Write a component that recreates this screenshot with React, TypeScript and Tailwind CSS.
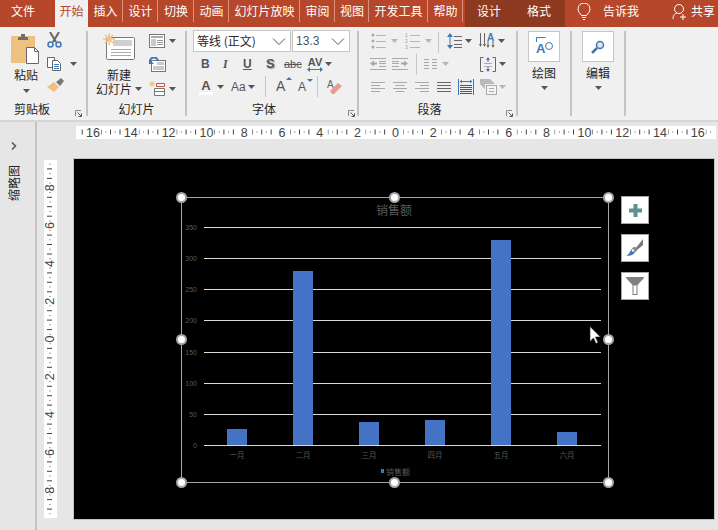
import React from "react";

const tabs: [string, string][] = [
  ["插入", "w-[35px]"],
  ["设计", "w-[35px]"],
  ["切换", "w-[36px]"],
  ["动画", "w-[35px]"],
  ["幻灯片放映", "w-[71px]"],
  ["审阅", "w-[35px]"],
  ["视图", "w-[34px]"],
  ["开发工具", "w-[59px]"],
  ["帮助", "w-[35px]"],
];

function Caret({ c = "#555", className = "" }: { c?: string; className?: string }) {
  return (
    <svg width="7" height="4" viewBox="0 0 7 4" className={className}>
      <path d="M0 0h7L3.500 4z" fill={c} />
    </svg>
  );
}

function Launcher() {
  return (
    <svg width="7" height="7" viewBox="0 0 7 7">
      <path d="M.5 6V.5H6" stroke="#8a8a8a" fill="none" />
      <path d="M2.500 2.500L6 6M6.500 3.500v3h-3" stroke="#555" fill="none" />
    </svg>
  );
}

function Sep() {
  return <div className="mt-[4px] h-[85px] w-[2px] shrink-0 bg-[#c4c4c4]" />;
}

function Label({ children, launcher }: { children: React.ReactNode; launcher?: string }) {
  return (
    <div className="relative h-[18px] text-center text-[12px] leading-[18px] text-[#262626]">
      {children}
      {launcher && (
        <span className={`absolute top-[10px] flex ${launcher}`}>
          <Launcher />
        </span>
      )}
    </div>
  );
}

function Lines({ x, w, ys, c = "#9a9a9a" }: { x: number; w: number; ys: number[]; c?: string }) {
  return (
    <>
      {ys.map((y) => (
        <path key={y} d={`M${x} ${y + 0.5}h${w}`} stroke={c} />
      ))}
    </>
  );
}

function Paste() {
  return (
    <svg width="30" height="32" viewBox="0 0 30 32">
      <rect x="0" y="2" width="24" height="27" rx="1" fill="#edc17f" />
      <path d="M7 3h3V0h4v3h3v3H7z" fill="#6d6d6d" />
      <path d="M15.500 13.500h8l4 4v12h-12z" fill="#fff" stroke="#666" />
      <path d="M23.500 13.500v4h4" fill="none" stroke="#666" />
    </svg>
  );
}
function Scissors() {
  return (
    <svg width="15" height="16" viewBox="0 0 15 16">
      <path d="M3 0l6 10M12 0L6 10" stroke="#666" strokeWidth="2" />
      <circle cx="3.500" cy="12.500" r="2.500" fill="none" stroke="#3f78b5" strokeWidth="1.500" />
      <circle cx="11.500" cy="12.500" r="2.500" fill="none" stroke="#3f78b5" strokeWidth="1.500" />
    </svg>
  );
}
function Copy() {
  return (
    <svg width="15" height="14" viewBox="0 0 15 14">
      <path d="M.5.500h7v10h-7z" fill="#fff" stroke="#666" />
      <path d="M5.500 3.500h5l3 3v7h-8z" fill="#fff" stroke="#666" />
      <Lines x={7} w={5} ys={[7, 9, 11]} c="#3f78b5" />
    </svg>
  );
}
function Brush() {
  return (
    <svg width="17" height="15" viewBox="0 0 17 15">
      <path d="M0 9l7-5 5 5-5 5z" fill="#edc17f" />
      <path d="M9 4l5-4 3 3-4 5z" fill="#777" />
    </svg>
  );
}
function NewSlide() {
  return (
    <svg width="32" height="28" viewBox="0 0 32 28">
      <rect x="3.500" y="4.500" width="28" height="22" rx="1" fill="#fff" stroke="#777" />
      <rect x="10" y="7" width="19" height="6" fill="#d0d0d0" />
      <Lines x={8} w={20} ys={[16, 19, 22]} c="#aaa" />
      <path d="M6 0v12M0 6h12M2 2l8 8M10 2l-8 8" stroke="#eec27e" strokeWidth="1.500" />
    </svg>
  );
}
function LayoutIcon() {
  return (
    <svg width="16" height="14" viewBox="0 0 16 14">
      <rect x=".5" y=".5" width="15" height="13" fill="#fff" stroke="#777" />
      <rect x="2" y="2" width="12" height="2" fill="#aaa" />
      <rect x="2" y="5" width="5" height="7" fill="#c9c9c9" />
      <Lines x={8} w={6} ys={[6, 8, 10]} c="#999" />
    </svg>
  );
}
function ResetIcon() {
  return (
    <svg width="17" height="15" viewBox="0 0 17 15">
      <rect x="2.500" y="3.500" width="14" height="11" fill="#fff" stroke="#777" />
      <rect x="8" y="5" width="7" height="3" fill="#c9c9c9" />
      <rect x="4" y="9" width="11" height="4" fill="#c9c9c9" />
      <path d="M1 5a4 4 0 0 1 8-1" fill="none" stroke="#3f78b5" strokeWidth="2" />
      <path d="M0 2v5h5z" fill="#3f78b5" />
    </svg>
  );
}
function SectionIcon() {
  return (
    <svg width="16" height="15" viewBox="0 0 16 15">
      <path d="M3 0v6M0 3h6M1 1l4 4M5 1L1 5" stroke="#eec27e" />
      <path d="M7.500 2.500h8v3h-8z" fill="#fff" stroke="#c2563a" />
      <path d="M5.500 7.500h10v7h-10zM5.500 10.500h10" fill="#fff" stroke="#777" />
    </svg>
  );
}
function Bullets() {
  return (
    <svg width="15" height="16" viewBox="0 0 15 16">
      <circle cx="2" cy="2" r="1.500" fill="#a9a9a9" />
      <circle cx="2" cy="8" r="1.500" fill="#a9a9a9" />
      <circle cx="2" cy="14" r="1.500" fill="#a9a9a9" />
      <Lines x={5} w={10} ys={[2, 8, 14]} c="#b5b5b5" />
    </svg>
  );
}
function Numbers() {
  return (
    <svg width="16" height="18" viewBox="0 0 16 18">
      <text x="0" y="5" fontSize="5" fill="#a0a0a0" fontFamily="Liberation Sans">1</text>
      <text x="0" y="11" fontSize="5" fill="#a0a0a0" fontFamily="Liberation Sans">2</text>
      <text x="0" y="17" fontSize="5" fill="#a0a0a0" fontFamily="Liberation Sans">3</text>
      <Lines x={5} w={10} ys={[3, 9, 15]} c="#b5b5b5" />
    </svg>
  );
}
function LineSpacing() {
  return (
    <svg width="15" height="16" viewBox="0 0 15 16">
      <path d="M3 2v12" stroke="#3f78b5" />
      <path d="M0 4l3-4 3 4zM0 12l3 4 3-4z" fill="#3f78b5" />
      <Lines x={7} w={8} ys={[3, 7, 11, 14]} c="#666" />
    </svg>
  );
}
function TextDir() {
  return (
    <svg width="17" height="18" viewBox="0 0 17 18">
      <path d="M1.500 1v12M5.500 1v12M9 9v5M14 9v5" stroke="#666" />
      <path d="M0 12l1.500 3L3 12zM4 12l1.500 3L7 12zM7.500 13l1.500 3 1.500-3zM12.500 13l1.500 3 1.500-3z" fill="#666" />
      <text x="8" y="9" fontSize="10" fontWeight="700" fill="#3f78b5" fontFamily="Liberation Sans">A</text>
    </svg>
  );
}
function Indent({ flip }: { flip?: boolean }) {
  return (
    <svg width="16" height="14" viewBox="0 0 16 14" className={flip ? "-scale-x-100" : ""}>
      <Lines x={0} w={16} ys={[1, 12]} c="#a9a9a9" />
      <Lines x={9} w={7} ys={[4, 6, 9]} c="#a9a9a9" />
      <path d="M0 6.500l4-3v2h3v2H4v2z" fill="#a9a9a9" />
    </svg>
  );
}
function Cols() {
  return (
    <svg width="13" height="11" viewBox="0 0 13 11">
      <Lines x={0} w={5} ys={[0, 3, 6, 9]} c="#aaa" />
      <Lines x={8} w={5} ys={[0, 3, 6, 9]} c="#aaa" />
    </svg>
  );
}
function AlignText() {
  return (
    <svg width="16" height="15" viewBox="0 0 16 15">
      <path d="M3.500.500H.5v14h3M12.500.500h3v14h-3" fill="none" stroke="#666" />
      <Lines x={4} w={8} ys={[6, 9]} c="#aaa" />
      <path d="M8 1v4M8 10v4" stroke="#3f78b5" />
      <path d="M6 3l2-3 2 3zM6 12l2 3 2-3z" fill="#3f78b5" />
    </svg>
  );
}
function Align({ kind }: { kind: "l" | "c" | "r" | "j" }) {
  const c = kind === "j" ? "#666" : "#a9a9a9";
  const short = kind === "j" ? 14 : 9;
  const sx = kind === "l" || kind === "j" ? 0 : kind === "c" ? 2.5 : 5;
  return (
    <svg width="14" height="11" viewBox="0 0 14 11">
      <Lines x={0} w={14} ys={[0, 6]} c={c} />
      <Lines x={sx} w={short} ys={[3, 9]} c={c} />
    </svg>
  );
}
function Distributed() {
  return (
    <svg width="16" height="16" viewBox="0 0 16 16">
      <path d="M.5 0v16M15.500 0v16" stroke="#3f78b5" />
      <path d="M2 2.500h12" stroke="#3f78b5" />
      <path d="M2 2.500l2-2v4zM14 2.500l-2-2v4z" fill="#3f78b5" />
      <Lines x={2} w={12} ys={[6, 8, 10, 12, 14]} c="#555" />
    </svg>
  );
}
function SmartArt() {
  return (
    <svg width="17" height="16" viewBox="0 0 17 16">
      <path d="M0 0h10l5 5H5v5L0 5z" fill="#b9b9b9" />
      <rect x="6.500" y="6.500" width="10" height="9" fill="#f4f4f4" stroke="#aaa" />
      <Lines x={9} w={5} ys={[9, 12]} c="#aaa" />
    </svg>
  );
}
function Eraser() {
  return (
    <svg width="16" height="16" viewBox="0 0 16 16">
      <text x="0" y="9" fontSize="10" fill="#666" fontFamily="Liberation Sans">A</text>
      <path d="M3 12l8-8 4 3-8 8H5z" fill="#e89a8e" />
    </svg>
  );
}
function DrawIcon() {
  return (
    <svg width="17" height="19" viewBox="0 0 17 19">
      <path d="M.5 5V.5h9" fill="none" stroke="#3f78b5" />
      <circle cx="13" cy="9" r="3.500" fill="#fff" stroke="#3f78b5" />
      <text x="0" y="16" fontSize="13" fontWeight="700" fill="#3f78b5" fontFamily="Liberation Sans">A</text>
    </svg>
  );
}
function FindIcon() {
  return (
    <svg width="14" height="14" viewBox="0 0 14 14">
      <circle cx="9" cy="5" r="3.500" fill="#dbe7f3" stroke="#3f78b5" strokeWidth="1.500" />
      <path d="M6 8l-5 5" stroke="#3f78b5" strokeWidth="2.500" />
    </svg>
  );
}

function Ruler() {
  const nums = [16, 14, 12, 10, 8, 6, 4, 2, 0, 2, 4, 6, 8, 10, 12, 14, 16];
  const step = 37.8;
  const ticks: React.ReactNode[] = [];
  for (let i = -68; i <= 68; i++) {
    if (i % 8 === 0) continue;
    const x = 318 + (i * step) / 8;
    if (x < 2 || x > 638) continue;
    const long = i % 2 === 0;
    const near = Math.abs(i) > 60 ? false : false;
    ticks.push(
      <path key={i} d={`M${x.toFixed(1)} ${long ? 3.5 : 5}v${long ? 5 : 2}`} stroke={long ? "#444" : "#aaa"} opacity={near ? 0 : 1} />
    );
  }
  return (
    <svg width="640" height="13" viewBox="0 0 640 13" className="block">
      {ticks}
      {nums.map((n, i) => (
        <g key={i}>
          <rect x={17 + i * step - 8} y="0" width="16" height="13" fill="#fff" />
          <text x={17 + i * step} y="10.500" fontSize="12.500" textAnchor="middle" fill="#444" fontFamily="Liberation Sans">
            {n}
          </text>
        </g>
      ))}
    </svg>
  );
}

function VRuler() {
  const nums = [8, 6, 4, 2, 0, 2, 4, 6, 8];
  const step = 37.8;
  const ticks: React.ReactNode[] = [];
  for (let i = -37; i <= 37; i++) {
    if (i % 8 === 0) continue;
    const y = 179 + (i * step) / 8;
    if (y < 1 || y > 357) continue;
    const long = i % 2 === 0;
    ticks.push(
      <path key={i} d={`M${long ? 3 : 5} ${y.toFixed(1)}h${long ? 5 : 2}`} stroke={long ? "#444" : "#aaa"} />
    );
  }
  return (
    <svg width="13" height="358" viewBox="0 0 13 358" className="block">
      {ticks}
      {nums.map((n, i) => {
        const y = 179 + (i - 4) * step;
        return (
          <text key={i} x="5.500" y={y + 4.5} fontSize="12.500" textAnchor="middle" fill="#444" fontFamily="Liberation Sans" transform={`rotate(-90 5.500 ${y})`}>
            {n}
          </text>
        );
      })}
    </svg>
  );
}

function Chart() {
  const ys = [227, 258, 289, 320, 352, 383, 414, 445];
  const labels = [350, 300, 250, 200, 150, 100, 50, 0];
  const bars: [number, number][] = [
    [227, 429],
    [293, 271],
    [359, 422],
    [425, 420],
    [491, 240],
    [557, 432],
  ];
  const cats = ["一月", "二月", "三月", "四月", "五月", "六月"];
  const handles: [number, number][] = [
    [181.5, 197.5], [394.5, 197.5], [608.5, 197.5],
    [181.5, 339.5], [608.5, 339.5],
    [181.5, 482.5], [394.5, 482.5], [608.5, 482.5],
  ];
  const font = "'Noto Sans CJK SC','Liberation Sans',sans-serif";
  return (
    <svg width="640" height="360" viewBox="74 159 640 360" className="block">
      <rect x="181.500" y="197.500" width="427" height="285" fill="none" stroke="#a6a6a6" />
      {ys.map((y, i) => (
        <g key={y}>
          <path d={`M204 ${y + 0.5}H601`} stroke="#d9d9d9" />
          <text x="197" y={y + 2.5} fontSize="7" textAnchor="end" fill="#595959" fontFamily="Liberation Sans">
            {labels[i]}
          </text>
        </g>
      ))}
      {bars.map(([x, y]) => (
        <rect key={x} x={x} y={y} width="20" height={445 - y} fill="#4472c4" />
      ))}
      {cats.map((c, i) => (
        <text key={c} x={237 + i * 66} y="458" fontSize="7.500" textAnchor="middle" fill="#595959" fontFamily={font}>
          {c}
        </text>
      ))}
      <text x="394" y="215" fontSize="12" textAnchor="middle" fill="#595959" fontFamily={font}>销售额</text>
      <rect x="381" y="469" width="3" height="4" fill="#4472c4" />
      <text x="386" y="474.500" fontSize="8" fill="#595959" fontFamily={font}>销售额</text>
      {handles.map(([x, y]) => (
        <circle key={`${x}-${y}`} cx={x} cy={y} r="4.500" fill="#fff" stroke="#a6a6a6" strokeWidth="2" />
      ))}
      <path d="M590 326.500v15l3.500-3.500 2.500 5.500 2-1-2.500-5.500h5z" fill="#fff" stroke="#222" strokeWidth=".6" />
    </svg>
  );
}

function ChartBtn({ children, top }: { children: React.ReactNode; top: string }) {
  return (
    <div className={`absolute left-[547px] flex h-[28px] w-[28px] items-center justify-center border border-[#a6a6a6] bg-white ${top}`}>
      {children}
    </div>
  );
}

export default function App() {
  return (
    <div className="flex h-[530px] w-[718px] flex-col overflow-hidden bg-[#e6e6e6] text-[12px] text-[#262626] font-['Noto_Sans_CJK_SC','Liberation_Sans',sans-serif]">
      {/* Title tabs */}
      <div className="flex h-[27px] shrink-0 bg-[#b7472a] leading-[22px] text-white">
        <div className="w-[55px] pr-[9px] text-center">文件</div>
        <div className="w-[33px] bg-[#f0f0f0] text-center text-[#b7472a]">开始</div>
        {tabs.map(([t, w]) => (
          <div key={t} className={`relative text-center ${w}`}>
            {t}
            <span className="absolute right-0 top-0 h-[22px] w-[1px] bg-[#dc927c]" />
          </div>
        ))}
        <div className="ml-[2px] flex w-[100px] bg-[#8e3a20]">
          <div className="w-[48px] text-center">设计</div>
          <div className="w-[52px] text-center">格式</div>
        </div>
        <div className="flex w-[153px] items-center">
          <svg width="14" height="18" viewBox="0 0 14 18" className="mb-[3px] ml-[12px]">
            <path d="M4.500 12.500C3 10 1 9 1 6a6 6 0 0 1 12 0c0 3-2 4-3.500 6.500z" fill="none" stroke="#fff" />
            <path d="M5 14.500h4M6 16.500h2" stroke="#fff" />
          </svg>
          <span className="mb-[5px] ml-[12px] w-[69px]">告诉我</span>
          <svg width="16" height="16" viewBox="0 0 16 16" className="mb-[3px]">
            <circle cx="7" cy="5" r="4.500" fill="none" stroke="#fff" />
            <path d="M1 15c0-4 2-5.500 4-6M11 10v6M8 13h6" fill="none" stroke="#fff" />
          </svg>
          <span className="mb-[5px] ml-[3px]">共享</span>
        </div>
      </div>

      {/* Ribbon */}
      <div className="box-content flex h-[93px] shrink-0 border-b-2 border-[#d6d6d6] bg-[#f0f0f0]">
        {/* Clipboard */}
        <div className="flex w-[86px] shrink-0 flex-col">
          <div className="flex h-[73px]">
            <div className="ml-[11px] flex w-[30px] flex-col items-center pt-[7px]">
              <Paste />
              <div className="w-[30px] text-center leading-[18px]">粘贴</div>
              <Caret className="mt-[5px]" />
            </div>
            <div className="ml-[6px] flex flex-col pt-[5px]">
              <Scissors />
              <div className="mt-[9px] flex items-center">
                <Copy />
                <Caret className="ml-[8px]" />
              </div>
              <div className="mt-[7px]">
                <Brush />
              </div>
            </div>
          </div>
          <Label launcher="left-[75px]">
            <span className="mr-[22px]">剪贴板</span>
          </Label>
        </div>
        <Sep />
        {/* Slides */}
        <div className="flex w-[97px] shrink-0 flex-col">
          <div className="flex h-[73px]">
            <div className="flex w-[58px] flex-col items-center pl-[4px] pt-[6px]">
              <NewSlide />
              <div className="mt-[7px] leading-[14px]">新建</div>
              <div className="flex items-center whitespace-nowrap leading-[14px]">
                幻灯片
                <Caret className="ml-[3px]" />
              </div>
            </div>
            <div className="ml-[3px] flex flex-col pt-[7px]">
              <div className="flex items-center">
                <LayoutIcon />
                <Caret className="ml-[4px]" />
              </div>
              <div className="mt-[9px]"><ResetIcon /></div>
              <div className="mt-[9px] flex items-center">
                <SectionIcon />
                <Caret className="ml-[4px]" />
              </div>
            </div>
          </div>
          <Label><span>幻灯片</span></Label>
        </div>
        <Sep />
        {/* Font */}
        <div className="flex w-[170px] shrink-0 flex-col">
          <div className="h-[73px] pl-[6px] pt-[3px]">
            <div className="flex h-[22px]">
              <div className="flex w-[98px] items-center justify-between whitespace-nowrap border border-[#c6c6c6] bg-white pl-[3px] pr-[4px]">
                <span>等线 (正文)</span>
                <svg width="14" height="7" viewBox="0 0 14 7"><path d="M1 .5l6 6 6-6" fill="none" stroke="#555" /></svg>
              </div>
              <div className="ml-[1px] flex w-[58px] items-center justify-between border border-[#c6c6c6] bg-white pl-[3px] pr-[4px] font-['Liberation_Sans',sans-serif] text-[#44546a]">
                <span>13.3</span>
                <svg width="14" height="7" viewBox="0 0 14 7"><path d="M1 .5l6 6 6-6" fill="none" stroke="#555" /></svg>
              </div>
            </div>
            <div className="mt-[2px] flex h-[20px] items-center font-['Liberation_Sans',sans-serif] text-[#555]">
              <span className="ml-[8px] w-[21px] text-[12px] font-bold">B</span>
              <span className="w-[21px] pl-[1px] font-['Liberation_Serif',serif] text-[12px] font-bold italic">I</span>
              <span className="w-[23px] text-[12px] font-bold underline">U</span>
              <span className="w-[18px] text-[13px] font-bold [text-shadow:1px_1px_1px_#aaa]">S</span>
              <span className="w-[23px] text-[11px] line-through">abc</span>
              <span className="flex w-[16px] flex-col items-center pt-[1px] text-[11px] font-bold leading-[10px]">
                AV
                <svg width="16" height="5" viewBox="0 0 16 5"><path d="M1 2.500h14" stroke="#3f78b5" /><path d="M0 2.500l3-2.500v5zM16 2.500l-3-2.500v5z" fill="#3f78b5" /></svg>
              </span>
              <Caret className="ml-[2px]" />
            </div>
            <div className="mt-[1px] flex h-[23px] items-center font-['Liberation_Sans',sans-serif] text-[#555]">
              <span className="ml-[6px] flex w-[14px] flex-col items-center text-[13px] font-bold leading-[13px]">
                A
                <span className="h-[3px] w-[14px] bg-white" />
              </span>
              <Caret className="ml-[4px]" />
              <span className="ml-[7px] w-[17px] text-[12px]">Aa</span>
              <Caret />
              <span className="ml-[10px] h-[21px] w-[1px] bg-[#c6c6c6]" />
              <span className="relative ml-[10px] w-[22px] text-[14px]">A
                <span className="absolute left-[10px] top-[1px] h-0 w-0 border-x-[3px] border-b-[3px] border-x-transparent border-b-[#3f78b5]" />
              </span>
              <span className="relative w-[19px] text-[12px]">A
                <span className="absolute left-[9px] top-[1px] h-0 w-0 border-x-[3px] border-t-[3px] border-x-transparent border-t-[#3f78b5]" />
              </span>
              <span className="h-[21px] w-[1px] bg-[#c6c6c6]" />
              <span className="ml-[9px] flex"><Eraser /></span>
            </div>
          </div>
          <Label launcher="left-[161px]"><span className="ml-[-16px]">字体</span></Label>
        </div>
        <Sep />
        {/* Paragraph */}
        <div className="flex w-[157px] shrink-0 flex-col">
          <div className="h-[73px] pl-[12px] pt-[5px]">
            <div className="flex h-[18px] items-center">
              <Bullets />
              <Caret c="#b5b5b5" className="ml-[5px]" />
              <span className="ml-[7px] flex"><Numbers /></span>
              <Caret c="#b5b5b5" className="ml-[4px]" />
              <span className="ml-[6px] mt-[2px] h-[21px] w-[1px] bg-[#c6c6c6]" />
              <span className="ml-[8px] flex"><LineSpacing /></span>
              <Caret className="ml-[3px]" />
              <span className="ml-[7px] flex"><TextDir /></span>
              <Caret className="ml-[2px]" />
            </div>
            <div className="mt-[5px] flex h-[18px] items-center">
              <span className="ml-[-1px] flex"><Indent /></span>
              <span className="ml-[6px] flex"><Indent flip /></span>
              <span className="ml-[8px] h-[21px] w-[1px] bg-[#c6c6c6]" />
              <span className="ml-[7px] flex"><Cols /></span>
              <Caret c="#b5b5b5" className="ml-[5px]" />
              <span className="ml-[31px] flex"><AlignText /></span>
              <Caret className="ml-[3px]" />
            </div>
            <div className="mt-[5px] flex h-[18px] items-center">
              <Align kind="l" />
              <span className="ml-[8px] flex"><Align kind="c" /></span>
              <span className="ml-[8px] flex"><Align kind="r" /></span>
              <span className="ml-[8px] flex"><Align kind="j" /></span>
              <span className="ml-[7px] flex"><Distributed /></span>
              <span className="ml-[6px] flex"><SmartArt /></span>
              <Caret c="#b5b5b5" className="ml-[2px]" />
            </div>
          </div>
          <Label launcher="left-[147px]"><span className="ml-[-16px]">段落</span></Label>
        </div>
        <Sep />
        {/* Draw */}
        <div className="flex w-[52px] shrink-0 flex-col items-center pt-[4px]">
          <div className="flex h-[31px] w-[32px] items-center justify-center border border-[#c6c6c6] bg-white">
            <DrawIcon />
          </div>
          <div className="mt-[2px] leading-[18px]">绘图</div>
          <Caret className="mt-[4px]" />
        </div>
        <Sep />
        {/* Edit */}
        <div className="flex w-[52px] shrink-0 flex-col items-center pt-[4px]">
          <div className="flex h-[31px] w-[32px] items-center justify-center border border-[#c6c6c6] bg-white">
            <FindIcon />
          </div>
          <div className="mt-[2px] leading-[18px]">编辑</div>
          <Caret className="mt-[4px]" />
        </div>
        <Sep />
      </div>

      {/* Workspace */}
      <div className="flex flex-1">
        <div className="flex w-[37px] shrink-0 flex-col items-center border-r-2 border-[#c4c4c4]">
          <svg width="6" height="8" viewBox="0 0 6 8" className="mr-[7px] mt-[20px]">
            <path d="M1 .5L4.500 4 1 7.500" fill="none" stroke="#555" strokeWidth="1.500" />
          </svg>
          <div className="mr-[8px] mt-[27px] h-[12px] w-[36px] shrink-0 -rotate-90 whitespace-nowrap text-center text-[12px] leading-[12px]">缩略图</div>
        </div>
        <div className="flex-1">
          <div className="ml-[39px] mt-[4px] h-[13px] w-[640px] bg-white">
            <Ruler />
          </div>
          <div className="flex">
            <div className="ml-[7px] mt-[21px] h-[358px] w-[13px] bg-white">
              <VRuler />
            </div>
            <div className="relative ml-[16px] mt-[19px] box-content h-[360px] w-[640px] border border-[#c4c4c4] bg-black">
              <Chart />
              <ChartBtn top="top-[37px]">
                <svg width="15" height="15" viewBox="0 0 15 15"><path d="M7.500 1v13M1 7.500h13" stroke="#5f9090" strokeWidth="4" /></svg>
              </ChartBtn>
              <ChartBtn top="top-[75px]">
                <svg width="18" height="18" viewBox="0 0 18 18">
                  <path d="M17 0v6l-6 5-1.500-1.500z" fill="#777" />
                  <circle cx="8.500" cy="10.500" r="2.500" fill="#888" />
                  <path d="M0 17c3-1 4-5 6-7l3 3c-1 2-3 4-9 4z" fill="#3f78b5" />
                  <circle cx="7" cy="11.500" r="1.200" fill="#fff" />
                </svg>
              </ChartBtn>
              <ChartBtn top="top-[113px]">
                <svg width="18" height="18" viewBox="0 0 18 18">
                  <path d="M0 0h18v1l-6.500 7v10h-5V8L0 1z" fill="#808080" />
                  <path d="M7.500 8.500h3V17h-3z" fill="#fff" />
                </svg>
              </ChartBtn>
            </div>
          </div>
        </div>
      </div>
    </div>
  );
}
